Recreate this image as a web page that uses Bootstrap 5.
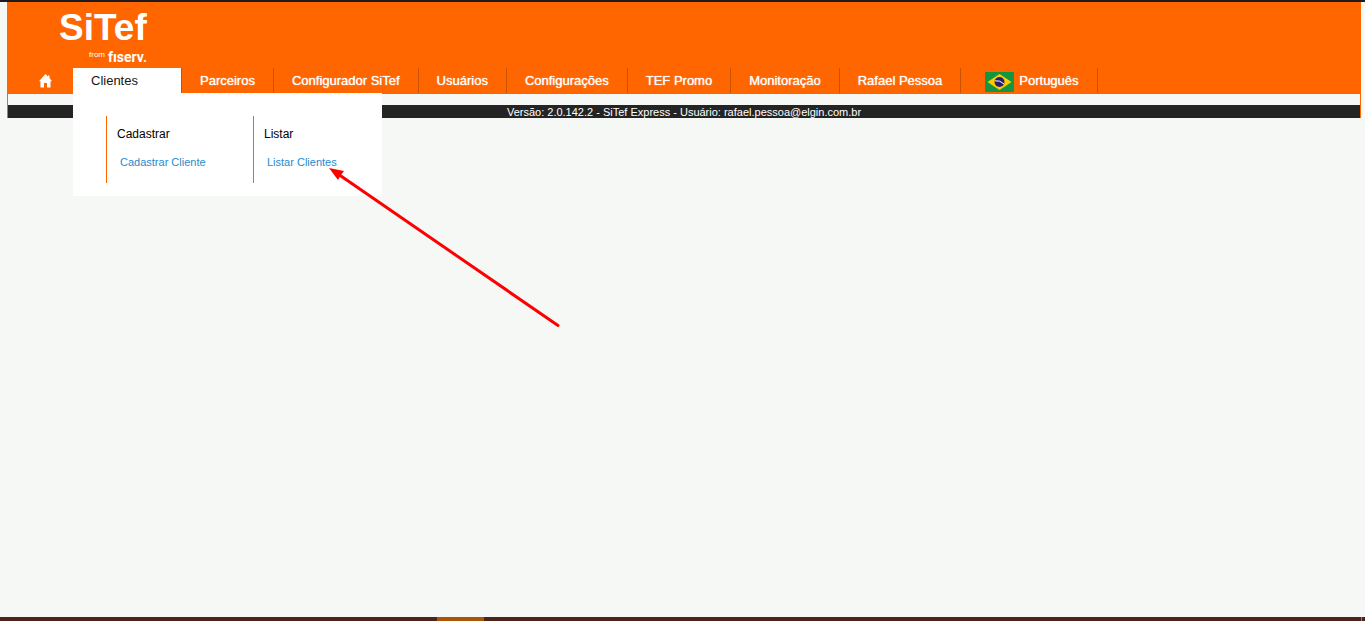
<!DOCTYPE html>
<html lang="pt-BR">
<head>
<meta charset="utf-8">
<meta name="viewport" content="width=device-width, initial-scale=1">
<title>SiTef Express</title>
<link href="https://cdn.jsdelivr.net/npm/bootstrap@5.3.0/dist/css/bootstrap.min.css" rel="stylesheet">
<style>
  body { background: #f6f8f6; font-family: "Liberation Sans", Arial, sans-serif; font-size: 13px; line-height: 16px; }
  .top-edge { height: 2px; background: #1f1a1f; }
  .site-header { margin: 0 4px 0 7px; border: solid #ff6600; border-width: 0 1px; }
  .brand-bar { background: #ff6600; }
  .brand { height: 66px; padding: 5px 0 0 51px; }
  .brand-box { width: 88px; }
  .brand-name { font-size: 37px; font-weight: 700; line-height: 41px; }
  .brand-sub { line-height: 18px; gap: 3px; }
  .brand-from { font-size: 8px; line-height: 12px; padding-bottom: 4px; }
  .brand-owner { font-family: Roboto, "Liberation Sans", sans-serif; font-size: 14px; font-weight: 700; }
  .main-menu { padding: 0 0 1px 12px; }
  .menu-tab { height: 25px; padding: 0 18px; color: #fff; border-right: 1px solid #c95300; text-shadow: 0 0 1px #fff; }
  .menu-tab:hover { color: #fff; }
  .menu-home { width: 53px; border: 0; }
  .menu-open, .menu-open:hover { width: 109px; background: #fff; color: #161616; text-shadow: none; }
  .menu-lang { padding-left: 24px; gap: 5px; }
  .flag { margin-top: 3px; }
  .mega { top: 25px; left: 0; z-index: 10; width: 309px; padding: 23px 0 13px 33px; background: #fff; }
  .mega-group { width: 147px; height: 67px; padding: 10px 0 0 10px; border-left: 1px solid #ff6600; }
  .mega-title { margin: 0 0 13px; font-size: 12px; line-height: 16px; font-weight: 400; color: #000; }
  .mega-link { padding-left: 3px; font-size: 11px; line-height: 14px; color: #268ccd; }
  .version-bar { margin-top: 11px; height: 13px; background: #242424; font-size: 11px; line-height: 14px; }
  .pointer-arrow { top: 74px; left: 256px; z-index: 20; pointer-events: none; }
  .task-strip { height: 4px; background: #4b241d; }
  .task-active { width: 47px; margin-left: 32%; background: #a95508; }
  .task-end { width: 1px; margin-right: 3px; background: #96827b; }
</style>
</head>
<body class="d-flex flex-column min-vh-100">
<div class="top-edge"></div>
<header class="site-header">
  <div class="brand-bar">
    <div class="brand text-white">
      <div class="brand-box">
        <div class="brand-name">SiTef</div>
        <div class="brand-sub d-flex justify-content-end align-items-center">
          <span class="brand-from">from</span><span class="brand-owner">fıserv.</span>
        </div>
      </div>
    </div>
    <nav aria-label="Menu principal">
      <ul class="main-menu list-unstyled d-flex mb-0 text-nowrap">
        <li><a href="#" class="menu-tab menu-home d-flex align-items-center" aria-label="Início">
          <svg width="14" height="14" viewBox="0 0 14 14" fill="#fff"><path d="M7.500 0 10 2.500V1.500h1.500V4L14 7.300h-1.500V13.500H9V9H6v4.500H2.500V7.300H1Z"/></svg></a></li>
        <li class="position-relative">
          <a href="#" class="menu-tab menu-open d-flex align-items-center text-decoration-none" aria-expanded="true">Clientes</a>
          <div class="mega position-absolute d-flex">
            <section class="mega-group flex-shrink-0">
              <h2 class="mega-title">Cadastrar</h2>
              <a href="#" class="mega-link d-block text-decoration-none">Cadastrar Cliente</a>
            </section>
            <section class="mega-group flex-shrink-0">
              <h2 class="mega-title">Listar</h2>
              <a href="#" class="mega-link d-block text-decoration-none">Listar Clientes</a>
            </section>
          </div>
          <svg class="pointer-arrow position-absolute" width="232" height="188" viewBox="0 0 232 188" aria-hidden="true">
            <path d="M9 32 229 183.500" stroke="#f00" stroke-width="3" stroke-linecap="round"/>
            <path d="M0 26 15 29 12 33 9 38Z" fill="#f00"/>
          </svg>
        </li>
        <li><a href="#" class="menu-tab d-flex align-items-center text-decoration-none">Parceiros</a></li>
        <li><a href="#" class="menu-tab d-flex align-items-center text-decoration-none">Configurador SiTef</a></li>
        <li><a href="#" class="menu-tab d-flex align-items-center text-decoration-none">Usuários</a></li>
        <li><a href="#" class="menu-tab d-flex align-items-center text-decoration-none">Configurações</a></li>
        <li><a href="#" class="menu-tab d-flex align-items-center text-decoration-none">TEF Promo</a></li>
        <li><a href="#" class="menu-tab d-flex align-items-center text-decoration-none">Monitoração</a></li>
        <li><a href="#" class="menu-tab d-flex align-items-center text-decoration-none">Rafael Pessoa</a></li>
        <li><a href="#" class="menu-tab menu-lang d-flex align-items-center text-decoration-none">
          <svg class="flag" width="29" height="20" viewBox="0 0 29 20" aria-hidden="true"><path fill="#159540" d="M0 0h29v20H0z"/><path fill="#fc0" d="M14.500 2 26.500 10 14.500 18 2.500 10Z"/><circle cx="14.500" cy="10" r="5" fill="#28206f"/><path d="M10 8.800Q15 8 19 12" fill="none" stroke="#fff"/></svg>Português</a></li>
      </ul>
    </nav>
  </div>
  <div class="version-bar text-white text-center">Versão: 2.0.142.2 - SiTef Express - Usuário: rafael.pessoa@elgin.com.br</div>
</header>
<main class="flex-grow-1"></main>
<footer class="task-strip d-flex" aria-hidden="true"><span class="task-active"></span><span class="task-end ms-auto"></span></footer>
<script src="https://cdn.jsdelivr.net/npm/bootstrap@5.3.0/dist/js/bootstrap.bundle.min.js"></script>
</body>
</html>
